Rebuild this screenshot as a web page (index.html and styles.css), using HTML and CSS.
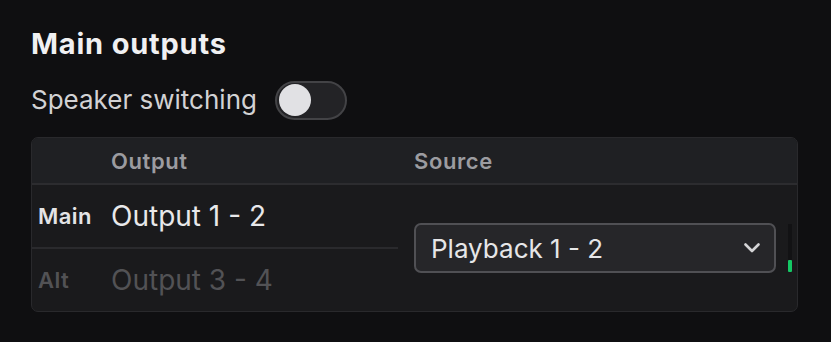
FILE: index.html
```html
<!DOCTYPE html>
<html>
<head>
<meta charset="utf-8">
<link rel="stylesheet" href="styles.css">
</head>
<body>
<section class="panel">
  <h1 class="title">Main outputs</h1>
  <div class="switch-row">
    <span class="switch-label">Speaker switching</span>
    <span class="toggle"><span class="knob"></span></span>
  </div>
  <div class="table">
    <div class="thead">
      <div class="col-label"></div>
      <div class="col-output">Output</div>
      <div class="col-source">Source</div>
    </div>
    <div class="tbody">
      <div class="rows">
        <div class="row active">
          <div class="col-label">Main</div>
          <div class="col-output">Output 1 - 2</div>
        </div>
        <div class="row inactive">
          <div class="col-label">Alt</div>
          <div class="col-output">Output 3 - 4</div>
        </div>
      </div>
      <div class="source-cell">
        <div class="select">
          <span class="select-text">Playback 1 - 2</span>
          <svg class="chevron" width="16" height="10" viewBox="0 0 16 10"><path d="M1.5 1.5 L8 8 L14.5 1.5" fill="none" stroke="#d4d4d6" stroke-width="2.6" stroke-linecap="round" stroke-linejoin="round"/></svg>
        </div>
        <div class="meter"><div class="meter-fill"></div></div>
      </div>
    </div>
  </div>
</section>
</body>
</html>
```

FILE: styles.css
```css
html, body {
  margin: 0;
  padding: 0;
  background: #0f0f11;
}
body {
  font-family: "Inter", "Noto Sans", sans-serif;
  color: #e6e6e8;
}
.panel {
  padding: 24px 33px 0 31px;
}
.title {
  margin: 0;
  font-size: 29px;
  font-weight: 700;
  letter-spacing: 0.8px;
  line-height: 40px;
  color: #f0f0f2;
}
.switch-row {
  display: flex;
  align-items: center;
  gap: 18px;
  margin-top: 16px;
}
.switch-label {
  font-size: 26px;
  font-weight: 400;
  color: #d2d2d4;
  line-height: 40px;
}
.toggle {
  box-sizing: border-box;
  width: 72px;
  height: 39px;
  border: 2px solid #434346;
  border-radius: 20px;
  background: #232326;
  display: flex;
  align-items: center;
  padding-left: 2px;
}
.knob {
  width: 32px;
  height: 32px;
  border-radius: 50%;
  background: #e1e1e4;
}
.table {
  margin-top: 17px;
  border: 1px solid #29292c;
  border-radius: 7px;
  background: #1a1a1c;
  overflow: hidden;
}
.thead {
  display: flex;
  height: 45px;
  align-items: center;
  background: #1f2023;
  border-bottom: 2px solid #2c2c2f;
  font-size: 22px;
  font-weight: 600;
  letter-spacing: 0.6px;
  color: #9c9ca0;
}
.col-label {
  width: 72px;
  padding-left: 7px;
  flex: none;
}
.thead .col-output {
  width: 303px;
  flex: none;
}
.tbody {
  display: flex;
  height: 126px;
}
.rows {
  width: 366px;
  flex: none;
  display: flex;
  flex-direction: column;
}
.row {
  flex: 1;
  display: flex;
  align-items: center;
}
.row.active {
  border-bottom: 2px solid #2a2a2d;
}
.row .col-label {
  font-size: 22px;
  font-weight: 600;
  letter-spacing: 0.4px;
  padding-left: 6px;
  width: 73px;
}
.row .col-output {
  font-size: 28px;
}
.row.active .col-label { color: #e4e4e6; }
.row.active .col-output { color: #e8e8ea; }
.row.inactive .col-label,
.row.inactive .col-output { color: #525255; }
.source-cell {
  flex: 1;
  display: flex;
  align-items: center;
  padding-left: 16px;
  padding-right: 5px;
  gap: 12px;
}
.select {
  box-sizing: border-box;
  flex: 1;
  height: 50px;
  border: 2px solid #505054;
  border-radius: 7px;
  background: #262629;
  display: flex;
  align-items: center;
  justify-content: space-between;
  padding: 0 14px 0 15px;
}
.select-text {
  font-size: 26px;
  color: #e6e6e8;
}
.chevron {
  display: block;
}
.meter {
  width: 4px;
  height: 48px;
  background: #121214;
  display: flex;
  flex-direction: column;
  justify-content: flex-end;
}
.meter-fill {
  height: 12px;
  background: #14c864;
  border-radius: 1px;
}
```
